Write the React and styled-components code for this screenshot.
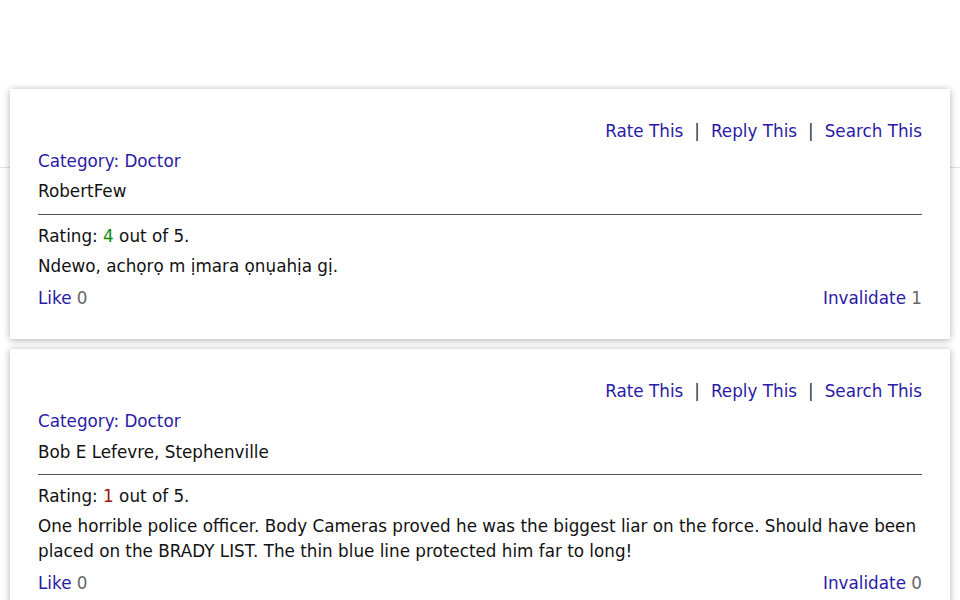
import React from "react";
import styled, { createGlobalStyle } from "styled-components";

const GlobalStyle = createGlobalStyle`
  body {
    margin: 0;
    background: #fff;
    font-family: "DejaVu Sans", sans-serif;
    font-size: 16.8px;
    color: #111;
  }
`;

const Header = styled.div`
  height: 167px;
  border-bottom: 1px solid #e2e2e2;
`;

const List = styled.div`
  margin-top: -79px;
  padding: 0 10px;
  display: flex;
  flex-direction: column;
  gap: 10px;
`;

const Card = styled.div`
  background: #fff;
  padding: 30px 28px 28px;
  box-shadow: 0 1px 7px rgba(0, 0, 0, 0.32);
  display: flex;
  flex-direction: column;
  gap: 5px;
  line-height: 1.5;
`;

const Actions = styled.div`
  display: flex;
  justify-content: flex-end;
  gap: 11px;
`;

const LinkText = styled.a`
  color: #2a1aa5;
  text-decoration: none;
  cursor: pointer;
`;

const Sep = styled.span`
  color: #333;
`;

const Divider = styled.hr`
  border: none;
  border-top: 1px solid #555;
  margin: 4px 0 4px;
`;

const Score = styled.span`
  color: ${(p) => (p.$value >= 3 ? "#14880f" : "#a01010")};
`;

const Footer = styled.div`
  display: flex;
  justify-content: space-between;
  margin-top: 2px;
`;

const Count = styled.span`
  color: #666;
`;

const reviews = [
  {
    category: "Doctor",
    name: "RobertFew",
    rating: 4,
    text: "Ndewo, achọrọ m ịmara ọnụahịa gị.",
    likes: 0,
    invalid: 1,
  },
  {
    category: "Doctor",
    name: "Bob E Lefevre, Stephenville",
    rating: 1,
    text: "One horrible police officer. Body Cameras proved he was the biggest liar on the force. Should have been placed on the BRADY LIST. The thin blue line protected him far to long!",
    likes: 0,
    invalid: 0,
  },
];

function Review({ review }) {
  return (
    <Card>
      <Actions>
        <LinkText>Rate This</LinkText>
        <Sep>|</Sep>
        <LinkText>Reply This</LinkText>
        <Sep>|</Sep>
        <LinkText>Search This</LinkText>
      </Actions>
      <LinkText>Category: {review.category}</LinkText>
      <div>{review.name}</div>
      <Divider />
      <div>
        Rating: <Score $value={review.rating}>{review.rating}</Score> out of 5.
      </div>
      <div>{review.text}</div>
      <Footer>
        <span>
          <LinkText>Like</LinkText> <Count>{review.likes}</Count>
        </span>
        <span>
          <LinkText>Invalidate</LinkText> <Count>{review.invalid}</Count>
        </span>
      </Footer>
    </Card>
  );
}

export default function App() {
  return (
    <>
      <GlobalStyle />
      <Header />
      <List>
        {reviews.map((r) => (
          <Review key={r.name} review={r} />
        ))}
      </List>
    </>
  );
}
